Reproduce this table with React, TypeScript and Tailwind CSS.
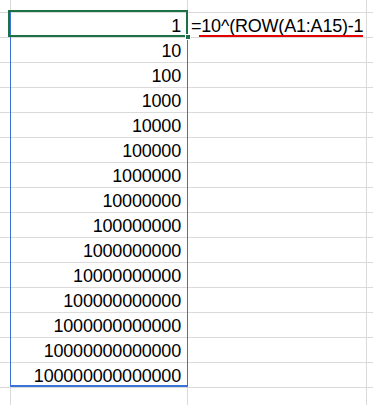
import React from 'react';

const values = Array.from({ length: 15 }, (_, i) => '1' + '0'.repeat(i));

const Row: React.FC<{ a?: string; b?: React.ReactNode }> = ({ a, b }) => (
  <div className="flex h-[25px] border-b border-[#dadada]">
    <div className="w-[11px] shrink-0 border-r border-[#dadada]" />
    <div className="w-[177px] shrink-0 border-r border-[#dadada] flex items-end justify-end pr-[6px] pb-[1px]">
      {a && <span className="leading-[20px]">{a}</span>}
    </div>
    <div className="w-[179px] shrink-0 border-r border-[#dadada] flex items-end pl-[3px] pb-[1px]">
      {b}
    </div>
    <div className="flex-1" />
  </div>
);

export default function App() {
  return (
    <div
      className="relative w-[373px] h-[405px] overflow-hidden bg-white text-black text-[18px] tracking-[-0.2px]"
      style={{ fontFamily: '"Liberation Sans", Arial, sans-serif' }}
    >
      {/* column header strip */}
      <div className="flex h-[13px] border-b border-[#dadada]">
        <div className="w-[11px] shrink-0 border-r border-[#dadada]" />
        <div className="w-[177px] shrink-0 border-r border-[#dadada]" />
        <div className="w-[179px] shrink-0 border-r border-[#dadada]" />
        <div className="flex-1" />
      </div>

      {values.map((v, i) => (
        <Row
          key={i}
          a={v}
          b={i === 0 ? <span className="leading-[20px] whitespace-nowrap">=10^(ROW(A1:A15)-1</span> : undefined}
        />
      ))}
      <Row />

      {/* spill range border */}
      <div className="absolute left-[10px] top-[10px] w-[178px] h-[377px] border border-b-2 border-[#3a72d8] pointer-events-none" />

      {/* active cell */}
      <div className="absolute left-[8px] top-[10px] w-[180px] h-[27px] border-2 border-[#1e7145] pointer-events-none" />
      <div className="absolute left-[185px] top-[34px] w-[6px] h-[6px] bg-[#1e7145] border border-white pointer-events-none" />

      {/* formula underline */}
      <div className="absolute left-[199px] top-[35px] w-[164px] h-[2px] bg-[#e60000]" />
    </div>
  );
}
